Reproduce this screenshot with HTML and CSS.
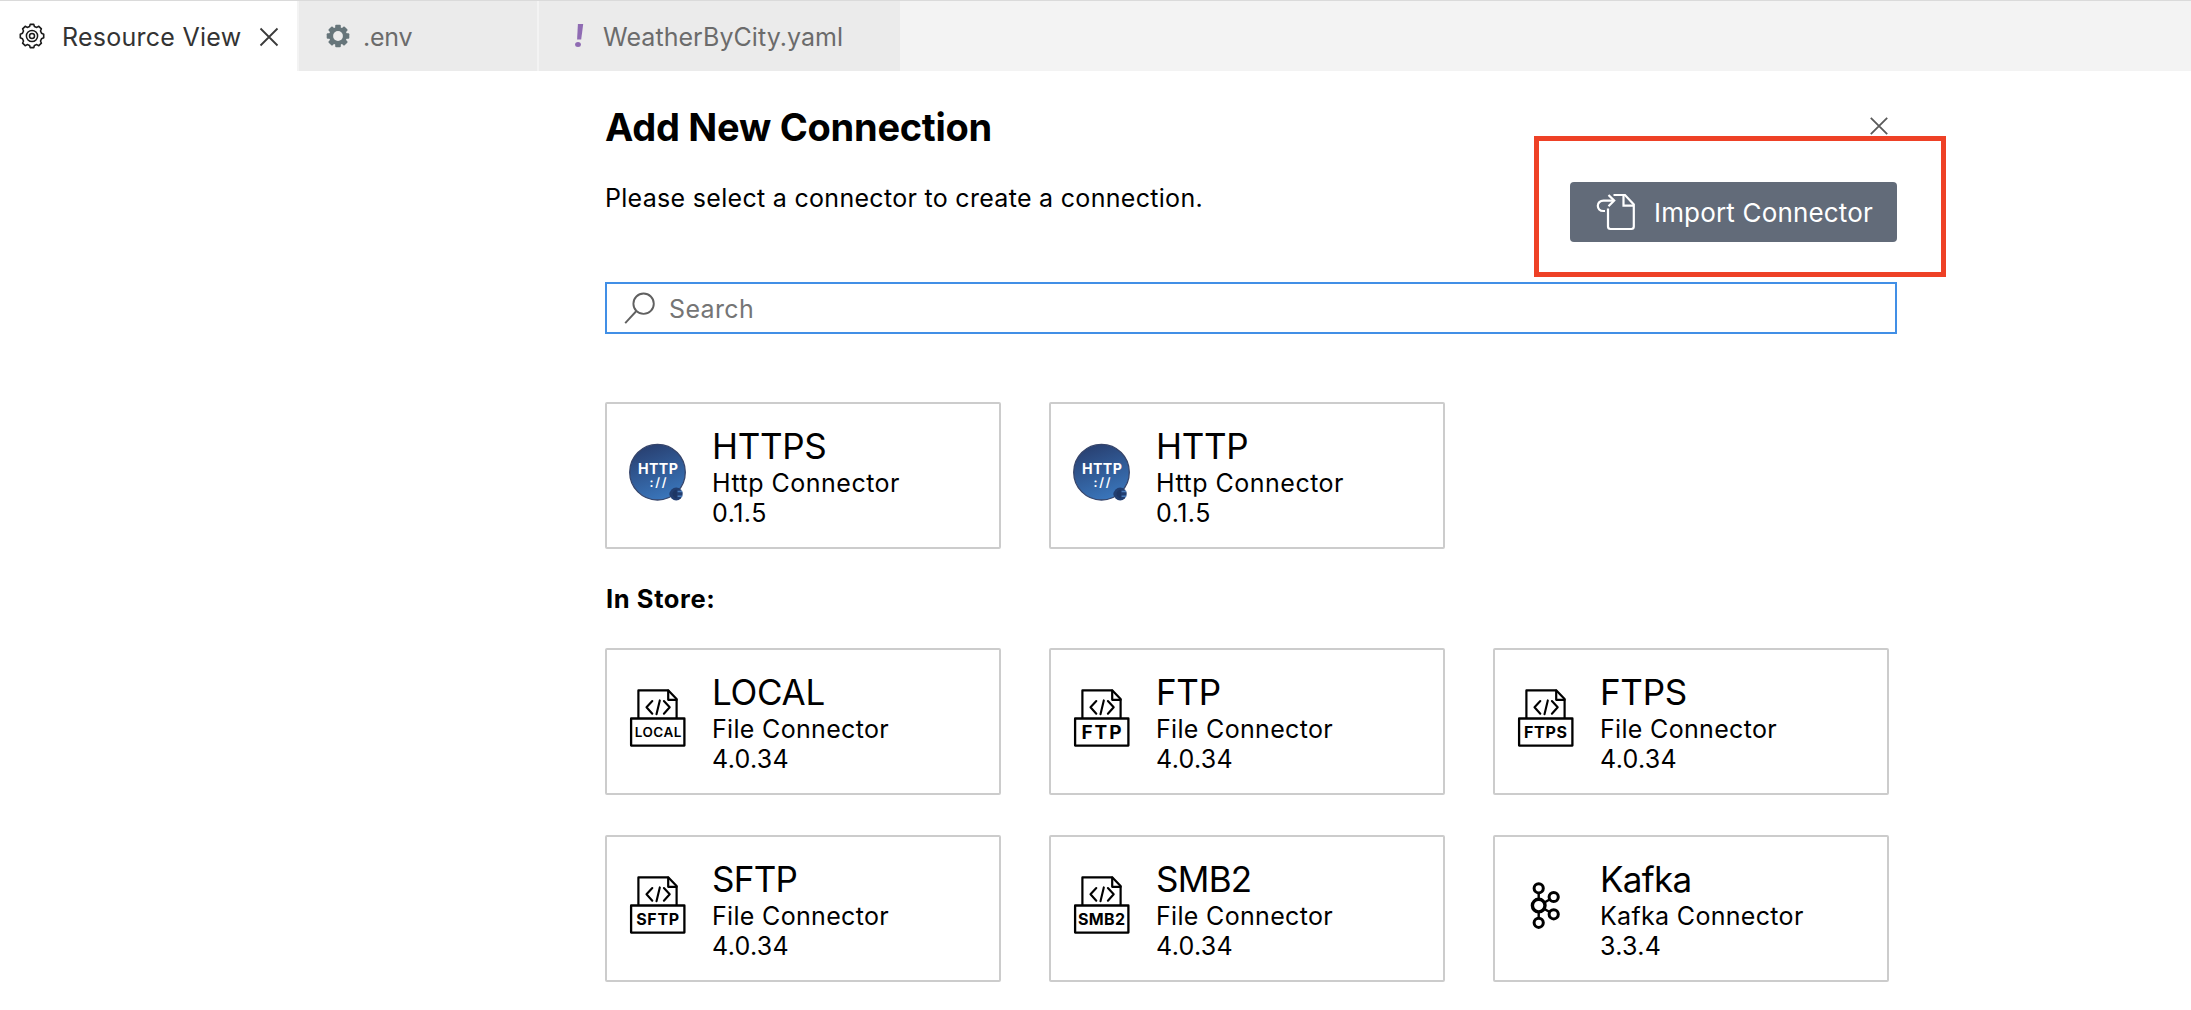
FILE: index.html
```
<!DOCTYPE html>
<html lang="en">
<head>
<meta charset="utf-8">
<title>Resource View</title>
<link rel="stylesheet" href="styles.css">
</head>
<body>
<svg class="defs" width="0" height="0" aria-hidden="true">
  <defs>
    <linearGradient id="globe" x1="0.3" y1="0" x2="0.65" y2="1">
      <stop offset="0" stop-color="#283f70"/>
      <stop offset="1" stop-color="#3a77bd"/>
    </linearGradient>
    <symbol id="http-icon" viewBox="0 0 58 58">
      <circle cx="28.5" cy="29.2" r="27.8" fill="url(#globe)" stroke="#36456b" stroke-width="1.3"/>
      <text class="http-label" x="8.9" y="31" textLength="40">HTTP</text>
      <text class="http-slashes" x="20.5" y="44.4" textLength="17">://</text>
      <circle cx="47.2" cy="51" r="6.5" fill="#223e70"/>
      <path d="M40.5 51h3.2" stroke="#223e70" stroke-width="3"/>
      <path d="M48.6 48.6h4.6M48.6 53.2h4.6" stroke="#4a7dbb" stroke-width="1.5"/>
      <path d="M47.8 46.8a4.2 4.2 0 0 0 0 8.400z" fill="#1d3664"/>
    </symbol>
    <symbol id="file-icon" viewBox="0 0 58 58">
      <g fill="none" stroke="#000" stroke-width="2.2" stroke-linejoin="round" stroke-linecap="round">
        <path d="M9.4 29V1.4h30l8.2 8.6v19"/>
        <path d="M39.2 1.6v9.2h8.4"/>
        <path d="M23.3 12l-5.8 6.3 5.8 6.4M30.8 11.4l-3.3 13.8M34.9 12l5.8 6.3-5.8 6.4" stroke-width="2.1"/>
        <path d="M2.1 29.5h53.3v27.1H2.1z" stroke-width="2.3"/>
      </g>
    </symbol>
    <symbol id="kafka-icon" viewBox="0 0 58 58">
      <g fill="none" stroke="#000" stroke-width="3">
        <path d="M21.7 16v8M21.7 35v8M27 26.7l6-3.5M27 32.7l6 3.5" stroke-width="2.4"/>
        <circle cx="21.7" cy="12.3" r="4.6"/>
        <circle cx="36.7" cy="21" r="4.6"/>
        <circle cx="36.7" cy="38.3" r="4.6"/>
        <circle cx="21.7" cy="46.8" r="4.6"/>
        <circle cx="21.7" cy="29.6" r="6.3" stroke-width="3.4"/>
      </g>
    </symbol>
  </defs>
</svg>

<nav class="tabs">
  <div class="tab tab-active">
    <svg class="gear-outline" width="28" height="28" viewBox="-14 -14 28 28" fill="none" stroke="#1a1a1a">
      <path stroke-width="1.6" stroke-linejoin="round" d="M-1.8 -11.6H1.8L2.4 -9.5L4.8 -8.6L6.8 -9.7L9.4 -7.2L8.5 -5L9.5 -2.8L11.7 -1.8V1.8L9.5 2.8L8.5 5L9.4 7.2L6.8 9.7L4.8 8.6L2.4 9.5L1.8 11.6H-1.8L-2.4 9.5L-4.8 8.6L-6.8 9.7L-9.4 7.2L-8.5 5L-9.5 2.8L-11.7 1.8V-1.8L-9.5 -2.8L-8.5 -5L-9.4 -7.2L-6.8 -9.7L-4.8 -8.6L-2.4 -9.5Z"/>
      <circle r="5.600" stroke-width="1.500"/>
      <circle r="2.500" stroke-width="1.500"/>
    </svg>
    <span class="tab-label label-resource">Resource View</span>
    <svg class="tab-close" width="20" height="20" viewBox="0 0 20 20" stroke="#3a3a3a" stroke-width="1.8"><path d="M1.500 1.500l17 17M18.500 1.500l-17 17"/></svg>
  </div>
  <div class="tab tab-env">
    <svg class="gear-solid" width="24" height="24" viewBox="-12 -12 24 24">
      <g fill="#66757a">
        <rect x="-2.8" y="-11.3" width="5.6" height="22.6" rx="1"/>
        <rect x="-2.8" y="-11.3" width="5.6" height="22.6" rx="1" transform="rotate(45)"/>
        <rect x="-2.8" y="-11.3" width="5.6" height="22.6" rx="1" transform="rotate(90)"/>
        <rect x="-2.8" y="-11.3" width="5.6" height="22.6" rx="1" transform="rotate(135)"/>
        <circle r="9"/>
      </g>
      <circle r="4.9" fill="#ebebeb"/>
    </svg>
    <span class="tab-label label-env">.env</span>
  </div>
  <div class="tab tab-yaml">
    <svg class="bang" width="12" height="24" viewBox="0 0 12 24" fill="#8f6bb3"><path d="M3.900 0h5.300l-2 15.500H3.100z"/><ellipse cx="4" cy="20.600" rx="2.900" ry="2.500"/></svg>
    <span class="tab-label label-yaml">WeatherByCity.yaml</span>
  </div>
</nav>

<main class="panel">
  <header class="title-row">
    <h1 class="title">Add New Connection</h1>
    <svg class="panel-close" width="18" height="18" viewBox="0 0 18 18" stroke="#5a5a5a" stroke-width="1.800"><path d="M.8 .8l16.400 16.400M17.200 .8L.8 17.200"/></svg>
  </header>
  <div class="intro-row">
    <p class="intro">Please select a connector to create a connection.</p>
    <button class="import-button" type="button">
      <svg width="40" height="38" viewBox="0 0 40 38" fill="none" stroke="#fff" stroke-width="2.200">
        <path d="M9 18H7.5C3.600 18 1.800 15.600 1.800 12.800S4 7.600 7.500 7.600H18"/>
        <path d="M12.500 2L18.200 7.600L12.500 13.300"/>
        <path d="M17.500 2H29L37.800 11.500V33.500Q37.800 36 35.300 36H14.500Q12 36 12 33.500V15.500"/>
        <path d="M27.500 2.300V12.700H37.500"/>
      </svg>
      <span class="import-label">Import Connector</span>
    </button>
  </div>
  <div class="search">
    <svg width="32" height="33" viewBox="0 0 32 33" fill="none" stroke="#606060" stroke-width="1.900"><circle cx="19.600" cy="11.700" r="10.200"/><path d="M12.400 19L1.200 31.200"/></svg>
    <span class="placeholder">Search</span>
  </div>

  <section class="cards installed">
    <article class="card"><svg class="icon"><use href="#http-icon"/></svg><div class="info"><div class="name">HTTPS</div><div class="wide">Http Connector</div><div class="wide">0.1.5</div></div></article>
    <article class="card"><svg class="icon"><use href="#http-icon"/></svg><div class="info"><div class="name">HTTP</div><div class="wide">Http Connector</div><div class="wide">0.1.5</div></div></article>
  </section>

  <h2 class="store-title">In Store:</h2>

  <section class="cards">
    <article class="card"><svg class="icon"><use href="#file-icon"/><text class="protocol small" x="5.800" y="48.300" textLength="46.500">LOCAL</text></svg><div class="info"><div class="name">LOCAL</div><div>File Connector</div><div>4.0.34</div></div></article>
    <article class="card"><svg class="icon"><use href="#file-icon"/><text class="protocol large" x="8.500" y="50" textLength="40">FTP</text></svg><div class="info"><div class="name">FTP</div><div>File Connector</div><div>4.0.34</div></div></article>
    <article class="card"><svg class="icon"><use href="#file-icon"/><text class="protocol" x="7" y="49" textLength="43">FTPS</text></svg><div class="info"><div class="name">FTPS</div><div>File Connector</div><div>4.0.34</div></div></article>
    <article class="card"><svg class="icon"><use href="#file-icon"/><text class="protocol" x="7.200" y="49" textLength="43">SFTP</text></svg><div class="info"><div class="name tight">SFTP</div><div>File Connector</div><div>4.0.34</div></div></article>
    <article class="card"><svg class="icon"><use href="#file-icon"/><text class="protocol" x="5" y="49" textLength="47">SMB2</text></svg><div class="info"><div class="name tight">SMB2</div><div>File Connector</div><div>4.0.34</div></div></article>
    <article class="card"><svg class="icon"><use href="#kafka-icon"/></svg><div class="info"><div class="name tight">Kafka</div><div>Kafka Connector</div><div>3.3.4</div></div></article>
  </section>
  <div class="highlight"></div>
</main>
</body>
</html>
```
FILE: styles.css
```
* { box-sizing: border-box; }

body {
  margin: 0;
  height: 1010px;
  overflow: hidden;
  background: #fff;
  color: #000;
  font: 25px/30px "Inter", "Liberation Sans", sans-serif;
  letter-spacing: 0.32px;
}

svg { display: block; flex: none; }
.defs { position: absolute; }

/* Editor tabs */
.tabs {
  display: flex;
  height: 71px;
  border-top: 1px solid #dadada;
  background: #f3f3f3;
}
.tab {
  display: flex;
  align-items: center;
  margin-right: 2px;
  background: #ebebeb;
  color: #6b6b6b;
  white-space: nowrap;
}
.tab-active { width: 297px; padding-left: 18px; background: #fff; color: #333; }
.tab-env { width: 238px; padding-left: 27px; }
.tab-yaml { width: 361px; padding-left: 35px; }
.tab-label { padding-top: 2px; }
.label-resource { width: 179px; margin: 0 18px 0 16px; letter-spacing: 0.26px; }
.label-env { margin-left: 13px; letter-spacing: -0.25px; }
.label-yaml { margin-left: 17px; letter-spacing: 0.06px; }
.tab-close { margin-top: 1px; }

/* Connection panel */
.panel {
  position: relative;
  width: 1292px;
  margin-left: 605px;
  padding-top: 32px;
}
.title-row {
  display: flex;
  justify-content: space-between;
  height: 48px;
}
.title {
  margin: 0;
  font-size: 38px;
  font-weight: 700;
  line-height: 48px;
  letter-spacing: -0.26px;
}
.panel-close { margin: 14px 9px 0 0; }
.intro-row {
  display: flex;
  justify-content: space-between;
  margin-top: 31px;
}
.intro { margin: 0; line-height: 32px; letter-spacing: 0.3px; }
.import-button {
  display: flex;
  align-items: center;
  width: 327px;
  height: 60px;
  padding: 0 0 0 26px;
  gap: 18px;
  border: 0;
  border-radius: 4px;
  background: #626b79;
  color: #fff;
  font: 26px/60px "Inter", "Liberation Sans", sans-serif;
  letter-spacing: 0.17px;
  white-space: nowrap;
}
.import-label { padding-top: 2px; }
.search {
  display: flex;
  align-items: center;
  height: 52px;
  margin-top: 40px;
  padding-left: 17px;
  gap: 13px;
  border: 2px solid #418fe6;
}
.placeholder { padding-top: 1px; color: #757575; letter-spacing: 0.35px; }

/* Connector cards */
.cards {
  display: grid;
  grid-template-columns: repeat(3, 396px);
  gap: 40px 48px;
}
.installed { margin-top: 68px; }
.card {
  display: flex;
  height: 147px;
  padding: 21px 0 0 22px;
  gap: 25px;
  border: 2px solid #ccc;
  border-radius: 2px;
}
.icon { width: 58px; height: 58px; margin-top: 18px; }
.name {
  font-size: 35px;
  line-height: 43px;
  letter-spacing: -0.3px;
}
.name.tight { letter-spacing: -0.7px; }
.wide { letter-spacing: 0.5px; }
.store-title {
  margin: 35px 0 34px 1px;
  font-size: 25.5px;
  font-weight: 700;
  line-height: 30px;
  letter-spacing: 0.6px;
}

/* Lettering inside the icons */
.protocol { font: 700 16px "Inter", sans-serif; letter-spacing: 0; }
.protocol.small { font-size: 13.5px; font-weight: 600; }
.protocol.large { font-size: 19px; }
.http-label { font: 700 14.2px "Inter", sans-serif; letter-spacing: 0; fill: #fff; }
.http-slashes { font: 600 12.5px "Inter", sans-serif; letter-spacing: 0; fill: #fff; }

/* Callout frame around the import action */
.highlight {
  position: absolute;
  top: 65px;
  left: 929px;
  width: 412px;
  height: 141px;
  border: 5px solid #ee4126;
}
```
